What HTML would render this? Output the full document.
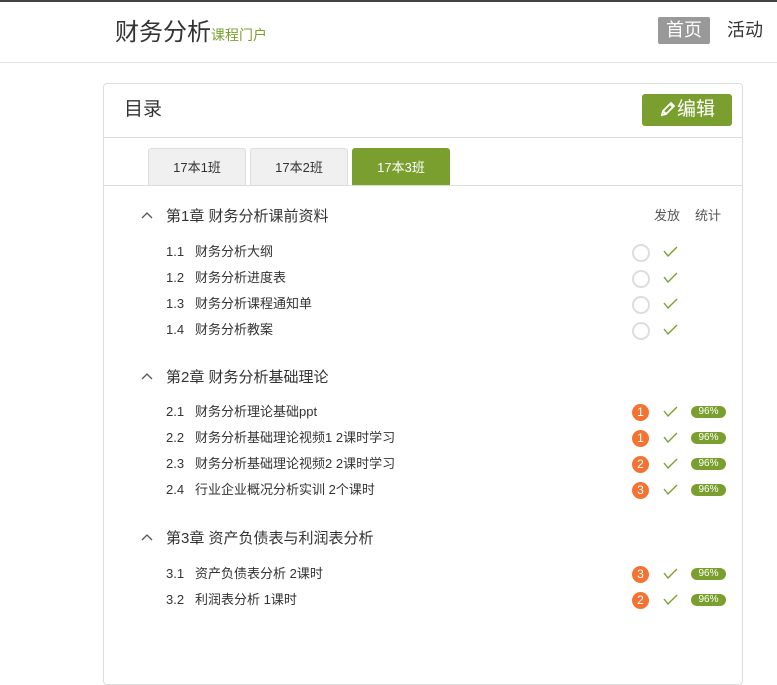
<!DOCTYPE html>
<html><head><meta charset="utf-8"><style>
body{margin:0;width:777px;height:610px;overflow:hidden;background:#fff;font-family:"Liberation Sans","Noto Sans CJK SC",sans-serif;color:#333;position:relative}
.a{position:absolute;white-space:nowrap}
.top{left:0;top:0;width:777px;height:2px;background:#444}
.hdr{left:0;top:62px;width:777px;height:1px;background:#e5e5e5}
.panel{left:103px;top:83px;width:638px;height:600px;border:1px solid #ddd;border-radius:4px}
.line{height:1px;background:#ddd;left:104px;width:638px}
.tab{top:148px;height:37px;width:98px;background:#f0f0f0;border:1px solid #ddd;border-bottom:none;border-radius:3px 3px 0 0;font-size:13px;text-align:center;line-height:37px;box-sizing:border-box}
.ch{font-size:15px;color:#333;line-height:18px}
.it{font-size:13px;color:#333;line-height:16px}
.circ{width:14px;height:14px;border:2px solid #ddd;border-radius:50%}
.num{width:17px;height:17px;border-radius:50%;background:#f47332;color:#fff;font-size:12px;text-align:center;line-height:17px}
.bd{width:35px;height:12px;border-radius:6px;background:#7a9f2f;color:#fff;font-size:10px;text-align:center;line-height:12px}
</style></head><body>
<div class="a top"></div>
<div class="a" style="left:115px;top:17px;font-size:24px;line-height:32px;color:#333">财务分析<span style="font-size:14px;color:#7a9f2f">课程门户</span></div>
<div class="a" style="left:658px;top:17px;width:52px;height:27px;background:#999;border-radius:2px;color:#fff;font-size:18px;text-align:center;line-height:27px">首页</div>
<div class="a" style="left:727px;top:17px;font-size:18px;line-height:27px;color:#333">活动</div>
<div class="a hdr"></div>
<div class="a panel"></div>
<div class="a" style="left:124px;top:97px;font-size:19px;line-height:26px;color:#333">目录</div>
<div class="a" style="left:642px;top:94px;width:90px;height:32px;background:#7a9f2f;border-radius:3px;color:#fff;font-size:19px;line-height:32px;text-align:center">
<svg width="18" height="18" viewBox="0 0 18 18" style="vertical-align:-3px"><path d="M3 15 L4 11 L12 3 L15 6 L7 14 Z M4 11 L7 14 M11 4 L14 7" fill="none" stroke="#fff" stroke-width="1.8"/></svg>编辑</div>
<div class="a line" style="top:137px"></div>
<div class="a tab" style="left:148px">17本1班</div>
<div class="a tab" style="left:250px">17本2班</div>
<div class="a tab" style="left:352px;background:#7a9f2f;color:#fff;border-color:#7a9f2f">17本3班</div>
<div class="a line" style="top:185px"></div>
<div class="a it" style="left:654px;top:208px;color:#555">发放</div>
<div class="a it" style="left:695px;top:208px;color:#555">统计</div>

<div id="c"></div>
<script>
var rows=[
['c',216,'第1章 财务分析课前资料'],
['i',251,'1.1','财务分析大纲',0],['i',277,'1.2','财务分析进度表',0],['i',303,'1.3','财务分析课程通知单',0],['i',329,'1.4','财务分析教案',0],
['c',377,'第2章 财务分析基础理论'],
['i',411,'2.1','财务分析理论基础ppt',1],['i',437,'2.2','财务分析基础理论视频1 2课时学习',1],['i',463,'2.3','财务分析基础理论视频2 2课时学习',2],['i',489,'2.4','行业企业概况分析实训 2个课时',3],
['c',538,'第3章 资产负债表与利润表分析'],
['i',573,'3.1','资产负债表分析 2课时',3],['i',599,'3.2','利润表分析 1课时',2]];
var h='';
rows.forEach(function(r){
if(r[0]=='c'){
h+='<svg class="a" style="left:141px;top:'+(r[1]-5)+'px" width="12" height="8"><path d="M1 7 L6 2 L11 7" fill="none" stroke="#555" stroke-width="1.3"/></svg>';
h+='<div class="a ch" style="left:166px;top:'+(r[1]-8)+'px">'+r[2]+'</div>';
}else{
var y=r[1];
h+='<div class="a it" style="left:166px;top:'+(y-7)+'px">'+r[2]+'</div><div class="a it" style="left:195px;top:'+(y-7)+'px">'+r[3]+'</div>';
if(r[4]==0)h+='<div class="a circ" style="left:632px;top:'+(y-7)+'px"></div>';
else h+='<div class="a num" style="left:632px;top:'+(y-7)+'px">'+r[4]+'</div><div class="a bd" style="left:691px;top:'+(y-5)+'px">96%</div>';
h+='<svg class="a" style="left:663px;top:'+(y-5)+'px" width="15" height="12"><path d="M1 5 L5 10 L14 1" fill="none" stroke="#7a9f2f" stroke-width="1.4"/></svg>';
}});
document.getElementById('c').innerHTML=h;
</script>
</body></html>
